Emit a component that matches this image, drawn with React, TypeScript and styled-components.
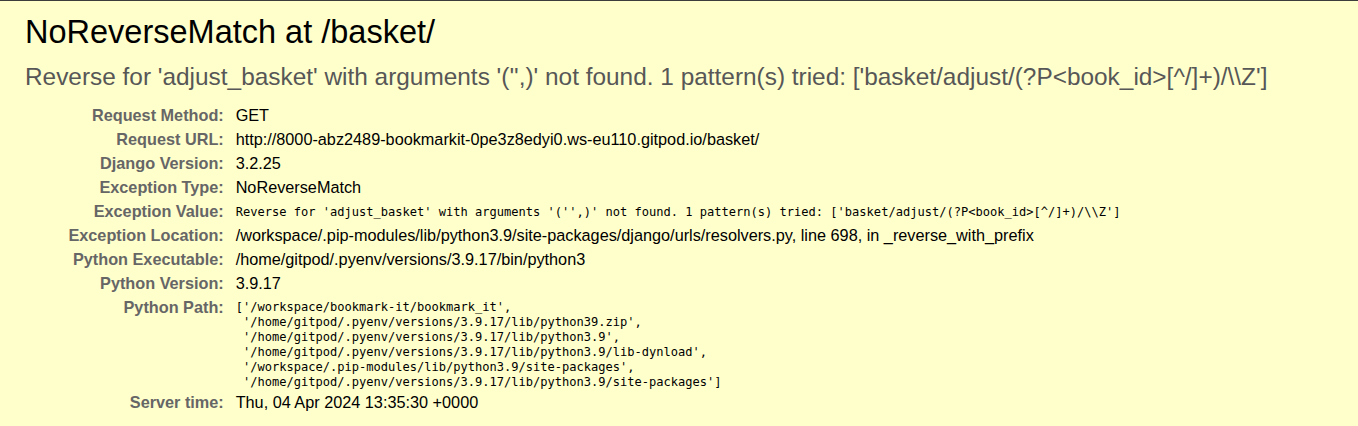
import React from "react";
import styled, { createGlobalStyle } from "styled-components";

const GlobalStyle = createGlobalStyle`
  html, body { margin: 0; padding: 0; background: #ffffcc; }
  * { box-sizing: content-box; }
`;

const Page = styled.div`
  min-height: 100vh;
  background: #ffffcc;
  border-top: 1px solid #3c3c3c;
  font-family: "Liberation Sans", Arial, sans-serif;
  font-size: 16.25px;
  color: #000;
`;

const Summary = styled.div`
  padding: 12.5px 25px;
  background: #ffffcc;
`;

const Title = styled.h1`
  margin: 0;
  font-weight: normal;
  font-size: 32.5px;
  line-height: normal;
`;

const ExceptionValue = styled.pre`
  margin: 12.5px 0;
  font-family: "Liberation Sans", Arial, sans-serif;
  font-size: 24.4px;
  color: #575757;
  white-space: pre-wrap;
  line-height: normal;
`;

const Meta = styled.table`
  border: none;
  border-collapse: collapse;
  width: 100%;
  background: transparent;
`;

const Label = styled.th`
  width: 195px;
  text-align: right;
  vertical-align: top;
  color: #666;
  font-weight: bold;
  padding: 2.5px 8.125px 2.5px 3.75px;
  white-space: nowrap;
`;

const Value = styled.td`
  vertical-align: top;
  padding: 2.5px 3.75px;
  text-align: left;
`;

const Mono = styled.pre`
  margin: 0 0 -2px;
  padding-top: 2px;
  font-family: "DejaVu Sans Mono", "Liberation Mono", monospace;
  font-size: 12.05px;
  line-height: 15px;
  white-space: pre-wrap;
`;

const MonoInline = styled(Mono)`
  margin: 0;
  line-height: 18px;
  padding-top: 1px;
`;

const rows: { label: string; value: string }[] = [
  { label: "Request Method:", value: "GET" },
  {
    label: "Request URL:",
    value: "http://8000-abz2489-bookmarkit-0pe3z8edyi0.ws-eu110.gitpod.io/basket/",
  },
  { label: "Django Version:", value: "3.2.25" },
  { label: "Exception Type:", value: "NoReverseMatch" },
];

const exc =
  "Reverse for 'adjust_basket' with arguments '('',)' not found. 1 pattern(s) tried: ['basket/adjust/(?P<book_id>[^/]+)/\\\\Z']";

const pythonPath = [
  "['/workspace/bookmark-it/bookmark_it',",
  " '/home/gitpod/.pyenv/versions/3.9.17/lib/python39.zip',",
  " '/home/gitpod/.pyenv/versions/3.9.17/lib/python3.9',",
  " '/home/gitpod/.pyenv/versions/3.9.17/lib/python3.9/lib-dynload',",
  " '/workspace/.pip-modules/lib/python3.9/site-packages',",
  " '/home/gitpod/.pyenv/versions/3.9.17/lib/python3.9/site-packages']",
].join("\n");

export default function App() {
  return (
    <>
      <GlobalStyle />
      <Page>
        <Summary>
          <Title>NoReverseMatch at /basket/</Title>
          <ExceptionValue>{exc}</ExceptionValue>
          <Meta>
            <tbody>
              {rows.map((r) => (
                <tr key={r.label}>
                  <Label>{r.label}</Label>
                  <Value>{r.value}</Value>
                </tr>
              ))}
              <tr>
                <Label>Exception Value:</Label>
                <Value>
                  <MonoInline>{exc}</MonoInline>
                </Value>
              </tr>
              <tr>
                <Label>Exception Location:</Label>
                <Value>
                  /workspace/.pip-modules/lib/python3.9/site-packages/django/urls/resolvers.py, line 698, in _reverse_with_prefix
                </Value>
              </tr>
              <tr>
                <Label>Python Executable:</Label>
                <Value>/home/gitpod/.pyenv/versions/3.9.17/bin/python3</Value>
              </tr>
              <tr>
                <Label>Python Version:</Label>
                <Value>3.9.17</Value>
              </tr>
              <tr>
                <Label>Python Path:</Label>
                <Value>
                  <Mono>{pythonPath}</Mono>
                </Value>
              </tr>
              <tr>
                <Label>Server time:</Label>
                <Value>Thu, 04 Apr 2024 13:35:30 +0000</Value>
              </tr>
            </tbody>
          </Meta>
        </Summary>
      </Page>
    </>
  );
}
